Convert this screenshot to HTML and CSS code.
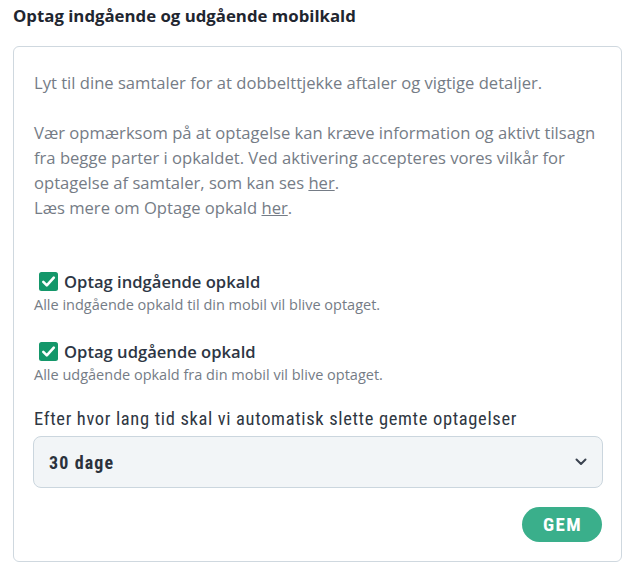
FILE: index.html
```html
<!DOCTYPE html>
<html lang="da">
<head>
<meta charset="utf-8">
<title>Optag opkald</title>
<link rel="stylesheet" href="styles.css">
</head>
<body>
<h2 class="title">Optag indgående og udgående mobilkald</h2>
<div class="card">
  <p class="intro">Lyt til dine samtaler for at dobbelttjekke aftaler og vigtige detaljer.</p>
  <p class="intro">Vær opmærksom på at optagelse kan kræve information og aktivt tilsagn fra begge parter i opkaldet. Ved aktivering accepteres vores vilkår for optagelse af samtaler, som kan ses <a href="#">her</a>.<br>Læs mere om Optage opkald <a href="#">her</a>.</p>

  <div class="option first">
    <label class="check">
      <svg class="box" width="19" height="19" viewBox="0 0 19 19"><rect x="0" y="0" width="19" height="19" rx="2.5" fill="#14976a"/><path d="M4.3 9.8 L7.8 13.3 L14.8 5.6" fill="none" stroke="#fff" stroke-width="2.6" stroke-linecap="round" stroke-linejoin="round"/></svg>
      <span>Optag indgående opkald</span>
    </label>
    <div class="help">Alle indgående opkald til din mobil vil blive optaget.</div>
  </div>

  <div class="option">
    <label class="check">
      <svg class="box" width="19" height="19" viewBox="0 0 19 19"><rect x="0" y="0" width="19" height="19" rx="2.5" fill="#14976a"/><path d="M4.3 9.8 L7.8 13.3 L14.8 5.6" fill="none" stroke="#fff" stroke-width="2.6" stroke-linecap="round" stroke-linejoin="round"/></svg>
      <span>Optag udgående opkald</span>
    </label>
    <div class="help">Alle udgående opkald fra din mobil vil blive optaget.</div>
  </div>

  <div class="field-label">Efter hvor lang tid skal vi automatisk slette gemte optagelser</div>
  <div class="select">
    <span class="value">30 dage</span>
    <svg class="chev" width="12" height="8" viewBox="0 0 12 8"><path d="M1.5 1.5 L6 6 L10.5 1.5" fill="none" stroke="#3b4350" stroke-width="2" stroke-linecap="round" stroke-linejoin="round"/></svg>
  </div>
  <div class="actions">
    <button class="save" type="button">GEM</button>
  </div>
</div>
</body>
</html>
```
FILE: styles.css
```css
html, body {
  margin: 0;
  padding: 0;
  background: #ffffff;
}
body {
  padding: 0 13px;
  font-family: "Open Sans", "Noto Sans", sans-serif;
  color: #2d3540;
}
.title {
  margin: 0;
  padding-top: 6px;
  font-size: 16.8px;
  line-height: 20px;
  font-weight: 700;
  color: #1f2630;
}
.card {
  margin-top: 20px;
  width: 609px;
  box-sizing: border-box;
  border: 1px solid #cfd8df;
  border-radius: 6px;
  padding: 23px 19px 19px 20px;
}
.intro {
  margin: 0 0 25px;
  font-size: 16.6px;
  line-height: 25px;
  color: #757c86;
}
.intro:last-of-type { margin-bottom: 0; }
.intro a {
  color: #757c86;
  text-decoration: underline;
}
.option.first { margin-top: 49px; }
.option + .option { margin-top: 24px; }
.check {
  display: flex;
  align-items: center;
  gap: 6px;
  padding-left: 5px;
  height: 24px;
  font-size: 16.6px;
  font-weight: 600;
  color: #2d3644;
}
.box { display: block; flex: none; }
.help {
  font-size: 14.5px;
  line-height: 20px;
  margin-top: 2px;
  color: #757c86;
}
.field-label {
  margin-top: 22px;
  font-family: "Liberation Sans Narrow", "Roboto Condensed", "Open Sans", sans-serif;
  font-size: 18.5px;
  letter-spacing: 0.65px;
  line-height: 24px;
  color: #2f3742;
}
.select {
  margin: 5px 0 0 -1px;
  width: calc(100% + 2px);
  height: 52px;
  box-sizing: border-box;
  display: flex;
  align-items: center;
  justify-content: space-between;
  padding: 0 15px 0 15px;
  background: #f2f5f7;
  border: 1px solid #cbd6de;
  border-radius: 8px;
}
.value {
  font-family: "Liberation Sans Narrow", "Roboto Condensed", "Open Sans", sans-serif;
  font-weight: 700;
  font-size: 18px;
  letter-spacing: 1.1px;
  color: #2b323c;
}
.chev { display: block; }
.actions {
  display: flex;
  justify-content: flex-end;
  margin-top: 19px;
}
.save {
  width: 80px;
  height: 35px;
  border: 0;
  border-radius: 18px;
  background: #3aaf8b;
  color: #ffffff;
  font-family: "Liberation Sans Narrow", "Roboto Condensed", "Open Sans", sans-serif;
  font-weight: 700;
  font-size: 19px;
  letter-spacing: 1.3px;
  padding: 0 0 0 1px;
}
```
